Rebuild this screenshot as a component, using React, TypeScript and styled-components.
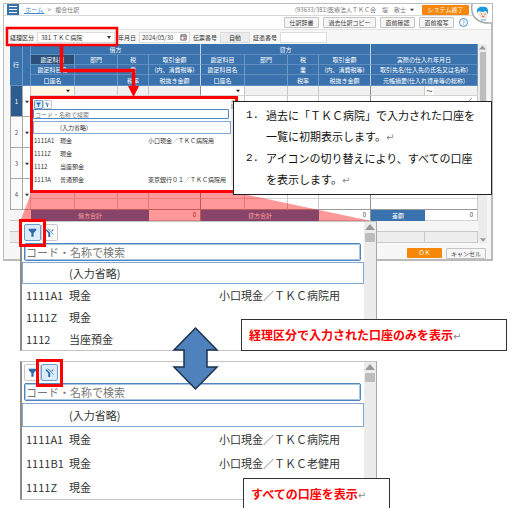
import React from "react";
import styled, { createGlobalStyle, css } from "styled-components";

const BLUE = "#3a72ae";
const LINE = "#c9c9c9";
const RED = "#ff0000";

const GlobalStyle = createGlobalStyle`
  *, *::before, *::after { box-sizing: border-box; }
  body { margin: 0; background: #fff; color: #333; font-family: "Noto Sans CJK JP", "Noto Sans", sans-serif; }
  button, input, select { font: inherit; color: inherit; margin: 0; }
`;

const Page = styled.main`
  position: relative;
  padding: 3px 19px 8px 3px;
  font-size: 6px;
  line-height: 9px;
`;

const Window = styled.section`
  position: relative;
  border: 1px solid #bdbdbd;
  border-right: 2px solid #bababa;
  border-bottom: 2px solid #bababa;
  background: #f7f7f7;
`;

const TitleBar = styled.header`
  display: flex;
  align-items: center;
  height: 12px;
  padding: 0 22px 0 3px;
  border-bottom: 1px solid #d9d9d9;
  background: #fff;
`;

const MenuButton = styled.button`
  display: flex;
  align-items: center;
  justify-content: center;
  width: 12px;
  height: 11px;
  padding: 0;
  border: 0;
  background: ${BLUE};
`;

const Crumbs = styled.nav`
  display: flex;
  gap: 3px;
  flex: 1;
  padding-left: 5px;
  color: #777;
  a { color: #3c8ad0; }
`;

const UserName = styled.span`
  display: flex;
  align-items: center;
  gap: 4px;
  white-space: pre;
  color: #777;
  margin-right: 8px;
`;

const OrangeButton = styled.button<{ $width: number }>`
  width: ${(p) => p.$width}px;
  height: 10px;
  padding: 0;
  border: 0;
  border-radius: 1px;
  background: #f68708;
  color: #fff;
  line-height: 10px;
`;

const ToolBar = styled.div`
  display: flex;
  align-items: center;
  justify-content: flex-end;
  gap: 4px;
  height: 13px;
  padding-right: 23px;
  background: #fff;
`;

const PlainButton = styled.button<{ $width: number }>`
  width: ${(p) => p.$width}px;
  height: 11px;
  padding: 0;
  border: 1px solid #c4c4c4;
  border-radius: 1px;
  background: #f6f6f6;
  color: #444;
  line-height: 9px;
`;

const HelpButton = styled.button`
  width: 9px;
  height: 9px;
  margin-left: 1px;
  padding: 0;
  border: 1px solid #4b8ac8;
  border-radius: 50%;
  background: #fff;
  color: #2f76bd;
  line-height: 7px;
`;

const Mascot = styled.svg`
  position: absolute;
  top: 0;
  right: -1px;
  width: 21px;
  height: 24px;
`;

const FilterBar = styled.form`
  display: flex;
  align-items: center;
  gap: 3px;
  height: 15px;
  padding-left: 6px;
  border-top: 1px solid #e2e2e2;
`;

const Field = styled.label`
  display: flex;
  align-items: center;
  gap: 3px;
  white-space: nowrap;
`;

const fieldBox = css`
  height: 11px;
  padding: 0 2px;
  border: 1px solid #dcdcdc;
  background: #fff;
  line-height: 9px;
`;

const Select = styled.select`
  ${fieldBox}
  appearance: none;
  width: 78px;
  padding-left: 3px;
  background: #fff url("data:image/svg+xml,%3Csvg xmlns='http://www.w3.org/2000/svg' width='4' height='3'%3E%3Cpath d='M0 0h4L2 3z' fill='%23333'/%3E%3C/svg%3E") no-repeat right 3px center;
`;

const TextBox = styled.input<{ $width: number; $muted?: boolean }>`
  ${fieldBox}
  width: ${(p) => p.$width}px;
  ${(p) => p.$muted && css`background: #ececec; padding-left: 8px;`}
`;

const DateBox = styled.span`
  ${fieldBox}
  display: flex;
  align-items: center;
  width: 51px;
  input { width: 38px; border: 0; padding: 0; background: none; }
`;

const GridArea = styled.div`
  display: flex;
  padding: 0 4px 0 6px;
`;

const Grid = styled.table`
  flex: 1;
  table-layout: fixed;
  width: 100%;
  border-collapse: separate;
  border-spacing: 0;
  background: #fff;
`;

const Head = styled.th<{ $tall?: boolean; $dark?: boolean; $group?: boolean }>`
  height: ${(p) => (p.$tall ? 11 : 10)}px;
  padding: 0;
  border-right: 1px solid ${(p) => (p.$group ? "#c3d3e4" : "#6f99c5")};
  border-bottom: 1px solid #5f8dbd;
  background: ${(p) => (p.$dark ? "#2b4f78" : BLUE)};
  color: #fff;
  font-weight: 400;
  white-space: nowrap;
`;

const Cell = styled.td<{ $tone?: "gray" | "cream"; $tall?: boolean; $group?: boolean }>`
  height: ${(p) => (p.$tall ? 11 : 10)}px;
  padding: 0 4px 0 0;
  border-right: 1px solid ${(p) => (p.$group ? "#8f8f8f" : LINE)};
  border-bottom: 1px solid ${(p) => (p.$tall ? "#9a9a9a" : "#d4d4d4")};
  background: ${(p) => (p.$tone === "gray" ? "#f1f1f1" : p.$tone === "cream" ? "#fff8e6" : "#fff")};
  text-align: right;
  line-height: 8px;
`;

const RangeMark = styled.span`
  display: block;
  width: 9px;
  background: #fff;
  text-align: center;
`;

const RowNumber = styled.th<{ $current?: boolean }>`
  padding: 0;
  border: 1px solid #a8a8a8;
  border-top: 0;
  background: ${(p) => (p.$current ? "#2b5b8f" : "#fafafa")};
  color: ${(p) => (p.$current ? "#fff" : "#555")};
  font-weight: 400;
`;

const RowMenu = styled.td`
  padding: 0;
  border-right: 1px solid ${LINE};
  border-bottom: 1px solid #a8a8a8;
  text-align: center;
`;

const Total = styled.th`
  height: 10px;
  padding: 0;
  background: ${BLUE};
  color: #fff;
  font-weight: 400;
`;

const Blank = styled.td<{ $line?: boolean }>`
  height: 11px;
  padding: 0;
  background: ${(p) => (p.$line ? "#ededed" : "#f5f5f5")};
  border-bottom: 1px solid ${LINE};
  border-right: ${(p) => (p.$line ? `1px solid ${LINE}` : "0")};
`;

const Spacer = styled.div`
  flex: 1;
`;

const ScrollTrack = styled.div<{ $width: number }>`
  display: flex;
  flex-direction: column;
  align-items: center;
  flex: none;
  width: ${(p) => p.$width}px;
  background: #ececec;
`;

const ScrollThumb = styled.div<{ $height: number; $width: number }>`
  width: ${(p) => p.$width}px;
  height: ${(p) => p.$height}px;
  margin-top: 1px;
  border-radius: 1px;
  background: #bdbdbd;
`;

const Footer = styled.footer`
  display: flex;
  justify-content: flex-end;
  align-items: center;
  gap: 4px;
  height: 16px;
  padding: 4px 5px 0 0;
`;

const Annotations = styled.svg`
  position: absolute;
  top: 0;
  left: 0;
  width: 400px;
  height: 225px;
  pointer-events: none;
`;

const PopupSpot = styled.div`
  position: absolute;
  top: 96px;
  left: 30px;
  width: 208px;
  height: 97px;
  border: 3px solid ${RED};
  background: #fff;
`;

const Picker = styled.section<{ $large?: boolean }>`
  display: flex;
  position: relative;
  background: #fff;
  ${(p) =>
    p.$large &&
    css`
      width: 357px;
      font-size: 11px;
      line-height: 16px;
      border: 1px solid #c4c4c4;
      border-left: 2px solid #8c8c8c;
      border-right-color: #a8a8a8;
    `}
`;

const PickerBody = styled.div`
  flex: 1;
  min-width: 0;
`;

const PickerTools = styled.div<{ $large?: boolean }>`
  position: relative;
  display: flex;
  align-items: center;
  height: ${(p) => (p.$large ? 21 : 10)}px;
  padding-left: ${(p) => (p.$large ? 2 : 1)}px;
`;

const FilterButton = styled.button<{ $large?: boolean; $on?: boolean }>`
  display: flex;
  align-items: center;
  justify-content: center;
  width: ${(p) => (p.$large ? 17 : 9)}px;
  height: ${(p) => (p.$large ? 17 : 9)}px;
  padding: 0;
  border: 1px solid ${(p) => (p.$on ? "#6c9fd0" : "#c8c8c8")};
  border-radius: ${(p) => (p.$large ? 2 : 1)}px;
  background: ${(p) => (p.$on ? "#dcebf9" : "#fff")};
  svg { width: ${(p) => (p.$large ? 9 : 5)}px; height: ${(p) => (p.$large ? 9 : 5)}px; }
`;

const RedFrame = styled.span<{ $second?: boolean }>`
  position: absolute;
  top: -3px;
  left: ${(p) => (p.$second ? 14 : -3)}px;
  width: 27px;
  height: 28px;
  border: 3px solid ${RED};
`;

const Search = styled.input<{ $large?: boolean }>`
  display: block;
  width: calc(100% - ${(p) => (p.$large ? 5 : 2)}px);
  height: ${(p) => (p.$large ? 18 : 10)}px;
  margin-left: ${(p) => (p.$large ? 2 : 0)}px;
  padding: 0 1px;
  border: 1px solid #4f86bd;
  border-radius: ${(p) => (p.$large ? 2 : 1)}px;
  outline: ${(p) => (p.$large ? "1px solid #a9c6e4" : "0")};
  outline-offset: -2px;
  background: #fff;
  &::placeholder { color: #777; opacity: 1; }
`;

const Options = styled.ul<{ $gap: number }>`
  margin: ${(p) => p.$gap}px 0 0;
  padding: 0;
  list-style: none;
`;

const Option = styled.li<{ $large?: boolean; $height: number; $boxed?: boolean }>`
  display: grid;
  grid-template-columns: ${(p) => (p.$large ? "43px 150px 1fr" : "26px 88px 1fr")};
  align-items: center;
  height: ${(p) => p.$height}px;
  padding-left: ${(p) => (p.$large ? 3 : 0)}px;
  border: 1px solid ${(p) => (p.$boxed ? "#82a9d2" : "transparent")};
  white-space: nowrap;
`;

const Note = styled.aside`
  position: absolute;
  top: 101px;
  left: 233px;
  width: 259px;
  height: 94px;
  padding: 3px 0 0 12px;
  border: 1px solid #222;
  background: #fff;
  color: #111;
  font-size: 11px;
  line-height: 21px;
  ol { margin: 0; padding: 0; list-style: none; }
  li { display: grid; grid-template-columns: 20px 1fr; white-space: nowrap; }
`;

const Numeral = styled.span`
  font-family: "Liberation Mono", monospace;
`;

const ReturnMark = styled.span`
  color: #888;
  font-family: "DejaVu Sans", sans-serif;
  font-weight: 400;
  font-size: 10px;
`;

const Compare = styled.div`
  position: relative;
  display: flex;
  flex-direction: column;
  gap: 10px;
  margin: -40px 0 0 17px;
`;

const Caption = styled.p<{ $top: number; $left: number; $width: number }>`
  position: absolute;
  top: ${(p) => p.$top}px;
  left: ${(p) => p.$left}px;
  width: ${(p) => p.$width}px;
  height: 32px;
  margin: 0;
  padding-left: 7px;
  border: 1px solid #333;
  background: #fff;
  color: ${RED};
  font-size: 12px;
  font-weight: 700;
  line-height: 29px;
  white-space: nowrap;
`;

const SwapArrow = styled.svg`
  position: absolute;
  top: 105px;
  left: 152px;
  width: 47px;
  height: 65px;
`;

const Triangle = ({ size, down, color = "#999" }: { size: number; down?: boolean; color?: string }) => (
  <svg width={size} height={size} viewBox="0 0 10 10" aria-hidden="true">
    <path d={down ? "M0 2h10L5 8z" : "M0 8h10L5 2z"} fill={color} />
  </svg>
);

const Funnel = () => (
  <svg viewBox="0 0 12 12" aria-hidden="true">
    <path d="M1 1h10v2L7.500 6.500V11.500H4.500V6.500L1 3z" fill="#2c69ac" />
  </svg>
);

const FunnelOff = () => (
  <svg viewBox="0 0 12 12" aria-hidden="true">
    <path d="M0 2h2.500L7 6.800V12H4.400V7z" fill="#2c69ac" />
    <path d="M4.500 2h3L6.300 4z" fill="#6d9bcb" />
    <path d="M3.500 .7L11.500 9" stroke="#5c90c6" strokeWidth="1.200" />
    <path d="M8.800 4.500L11 2" stroke="#2c69ac" strokeWidth="1.400" />
  </svg>
);

type Account = [code: string, name: string, detail: string];

interface PickerProps {
  label: string;
  accounts: Account[];
  showAll?: boolean;
  large?: boolean;
  rowHeight: number;
  gap: number;
}

function AccountPicker({ label, accounts, showAll = false, large, rowHeight, gap }: PickerProps) {
  return (
    <Picker $large={large} aria-label={label}>
      <PickerBody>
        <PickerTools $large={large}>
          <FilterButton $large={large} $on={!showAll} aria-label="経理区分で絞り込む"><Funnel /></FilterButton>
          <FilterButton $large={large} $on={showAll} aria-label="すべて表示"><FunnelOff /></FilterButton>
          {large && <RedFrame $second={showAll} />}
        </PickerTools>
        <Search $large={large} aria-label="口座の検索" placeholder="コード・名称で検索" />
        <Options $gap={gap} role="listbox" aria-label={label}>
          <Option role="option" $large={large} $height={rowHeight} $boxed>
            <span /><span>(入力省略)</span>
          </Option>
          {accounts.map(([code, name, detail]) => (
            <Option role="option" key={code} $large={large} $height={rowHeight}>
              <span>{code}</span><span>{name}</span><span>{detail}</span>
            </Option>
          ))}
        </Options>
      </PickerBody>
      <ScrollTrack $width={large ? 12 : 4}>
        <Triangle size={large ? 10 : 4} />
        <ScrollThumb $width={large ? 10 : 4} $height={large ? 9 : 5} />
      </ScrollTrack>
    </Picker>
  );
}

const COLUMNS = [13, 8, 44, 43, 31, 52, 44, 43, 31, 52, 54, 53];

const HEAD_ROWS = [
  ["勘定科目", "部門", "税", "取引金額", "実際の仕入れ年月日"],
  ["勘定科目名", "", "業", "(内、消費税等)", "取引先名(仕入先の氏名又は名称)"],
  ["口座名", "", "税率", "税抜き金額", "元帳摘要(仕入れ資産等の総称)"],
];

function EntryRows({ index }: { index: number }) {
  const current = index === 1;
  return (
    <>
      {[0, 1, 2].map((line) => (
        <tr key={line}>
          {line === 0 && (
            <>
              <RowNumber rowSpan={3} scope="row" $current={current}>{index}</RowNumber>
              <RowMenu rowSpan={3}><Triangle size={4} down color="#333" /></RowMenu>
            </>
          )}
          {[0, 1, 2, 3, 4, 5, 6, 7].map((col) => (
            <Cell
              key={col}
              $tall={line === 2}
              $group={col === 3 || col === 7}
              $tone={current && line === 0 ? (col === 0 ? "cream" : col === 4 ? undefined : "gray") : undefined}
            >
              {current && line === 0 && (col === 0 || col === 4) && <Triangle size={4} down color="#222" />}
            </Cell>
          ))}
          {line === 0 ? (
            <>
              <Cell $tone={current ? "gray" : undefined} />
              <Cell $tone={current ? "gray" : undefined}>{current && <RangeMark>～</RangeMark>}</Cell>
            </>
          ) : (
            <Cell colSpan={2} $tall={line === 2}>
              {line === 1 && <svg width="6" height="6" viewBox="0 0 6 6" aria-hidden="true"><path d="M1 5l4-4" stroke="#999" /></svg>}
            </Cell>
          )}
        </tr>
      ))}
    </>
  );
}

function JournalGrid() {
  return (
    <GridArea>
      <Grid>
        <colgroup>{COLUMNS.map((w, i) => <col key={i} width={w} />)}</colgroup>
        <thead>
          <tr>
            <Head rowSpan={4}>行</Head>
            <Head rowSpan={4} />
            <Head colSpan={4} $tall $group>借方</Head>
            <Head colSpan={4} $tall $group>貸方</Head>
            <Head colSpan={2} $tall />
          </tr>
          {HEAD_ROWS.map((row, r) => (
            <tr key={r}>
              {[0, 1].map((side) =>
                row.slice(0, 4).map((text, c) => (
                  <Head key={`${side}${c}`} $tall={r === 2} $group={c === 3} $dark={side + r + c === 0}>{text}</Head>
                ))
              )}
              <Head colSpan={2} $tall={r === 2}>{row[4]}</Head>
            </tr>
          ))}
        </thead>
        <tbody>{[1, 2, 3, 4].map((n) => <EntryRows key={n} index={n} />)}</tbody>
        <tfoot>
          <tr>
            <Blank as="td" colSpan={2} />
            <Total colSpan={3}>借方合計</Total>
            <Cell $group>0</Cell>
            <Total colSpan={3}>貸方合計</Total>
            <Cell $group>0</Cell>
            <Total>差額</Total>
            <Cell>0</Cell>
          </tr>
          <tr><Blank colSpan={12} /></tr>
          <tr><Blank $line colSpan={11} /><Blank $line /></tr>
        </tfoot>
      </Grid>
      <ScrollTrack $width={9}>
        <Triangle size={7} />
        <ScrollThumb $width={6} $height={86} />
        <Spacer />
        <Triangle size={6} down />
      </ScrollTrack>
    </GridArea>
  );
}

const HOSPITAL = "小口現金／ＴＫＣ病院用";

export default function App() {
  return (
    <Page lang="ja">
      <GlobalStyle />
      <Window>
        <TitleBar>
          <MenuButton aria-label="メニュー">
            <svg width="8" height="7" viewBox="0 0 8 7"><path d="M0 .5h8M0 3.500h8M0 6.500h8" stroke="#fff" /></svg>
          </MenuButton>
          <Crumbs><a href="#home">&nbsp;ホーム&nbsp;</a><span>&gt;</span><span>&nbsp;複合仕訳</span></Crumbs>
          <UserName>
            <span>{"(93633/381)医療法人ＴＫＣ会　堤　敬士"}</span>
            <Triangle size={4} down color="#444" />
          </UserName>
          <OrangeButton $width={47}>システム終了</OrangeButton>
        </TitleBar>
        <ToolBar>
          <PlainButton $width={35}>仕訳辞書</PlainButton>
          <PlainButton $width={53}>過去仕訳コピー</PlainButton>
          <PlainButton $width={35}>直前確認</PlainButton>
          <PlainButton $width={35}>直前複写</PlainButton>
          <HelpButton aria-label="ヘルプ">?</HelpButton>
        </ToolBar>
        <Mascot viewBox="0 0 21 24" aria-hidden="true">
          <path d="M1 0C0 12 6 20 21 19V0z" fill="#fff" />
          <path d="M1 0C-1 12 6 20 21 19" fill="none" stroke="#aaa" strokeWidth="1.500" />
          <circle cx="12" cy="10" r="4.500" fill="#fde3d6" />
          <path d="M6 9C5 4 9 2 12 3c4-1 6 3 5 7l-2-3-4 1-3-1z" fill="#189bd8" />
          <path d="M10 14.500l2.500 1 2.500-1v2h-5z" fill="#7fc4ea" />
          <circle cx="10.500" cy="10" r=".5" fill="#555" />
          <circle cx="14" cy="10" r=".5" fill="#555" />
          <path d="M11 12q1.500 1.300 2.500 0" stroke="#e33" fill="none" />
        </Mascot>
        <FilterBar>
          <Field>
            経理区分
            <Select defaultValue="381"><option value="381">381 ＴＫＣ病院</option></Select>
          </Field>
          <Field>
            年月日
            <DateBox>
              <input aria-label="年月日" defaultValue="2024/05/30" />
              <svg width="8" height="8" viewBox="0 0 8 8" aria-hidden="true">
                <path d="M1 1.500h6v6H1zM1 3h6" fill="none" stroke="#555" />
                <path d="M4 4.500h2v2H4z" fill="#b55" />
              </svg>
            </DateBox>
          </Field>
          <Field>伝票番号<TextBox $width={30} $muted readOnly defaultValue="自動" /></Field>
          <Field>証憑番号<TextBox $width={47} /></Field>
        </FilterBar>
        <JournalGrid />
        <Footer>
          <OrangeButton $width={35}>ＯＫ</OrangeButton>
          <PlainButton $width={40}>キャンセル</PlainButton>
        </Footer>
      </Window>

      <PopupSpot>
        <AccountPicker
          label="口座一覧"
          rowHeight={13}
          gap={2}
          accounts={[
            ["1111A1", "現金", HOSPITAL],
            ["1111Z", "現金", ""],
            ["1112", "当座預金", ""],
            ["1113A", "普通預金", "東京銀行０１／ＴＫＣ病院用"],
          ]}
        />
      </PopupSpot>
      <Annotations viewBox="0 0 400 225" aria-hidden="true">
        <path d="M31 193H238L376 222H20z" fill={RED} fillOpacity=".4" />
        <rect x="7" y="28" width="110" height="17" fill="none" stroke={RED} strokeWidth="2.500" />
        <path d="M61.500 45V70.500H133.500V88" fill="none" stroke={RED} strokeWidth="3.500" />
        <path d="M128 86h11l-5.500 11z" fill={RED} />
      </Annotations>
      <Note>
        <ol>
          <li><Numeral>1.</Numeral><span>過去に「ＴＫＣ病院」で入力された口座を<br />一覧に初期表示します。<ReturnMark>↵</ReturnMark></span></li>
          <li><Numeral>2.</Numeral><span>アイコンの切り替えにより、すべての口座<br />を表示します。<ReturnMark>↵</ReturnMark></span></li>
        </ol>
      </Note>

      <Compare>
        <AccountPicker
          large
          label="経理区分で入力された口座"
          rowHeight={22}
          gap={1}
          accounts={[["1111A1", "現金", HOSPITAL], ["1111Z", "現金", ""], ["1112", "当座預金", ""]]}
        />
        <AccountPicker
          large
          showAll
          label="すべての口座"
          rowHeight={24}
          gap={2}
          accounts={[["1111A1", "現金", HOSPITAL], ["1111B1", "現金", "小口現金／ＴＫＣ老健用"], ["1111Z", "現金", ""]]}
        />
        <SwapArrow viewBox="0 0 47 65" aria-hidden="true">
          <path d="M23.500 2L45 24H35V41H45L23.500 63 2 41H12V24H2z" fill="#4f81bd" stroke="#1c334e" strokeWidth="1.500" />
        </SwapArrow>
        <Caption $top={98} $left={221} $width={266}>経理区分で入力された口座のみを表示<ReturnMark>↵</ReturnMark></Caption>
        <Caption $top={257} $left={223} $width={147}>すべての口座を表示<ReturnMark>↵</ReturnMark></Caption>
      </Compare>
    </Page>
  );
}
